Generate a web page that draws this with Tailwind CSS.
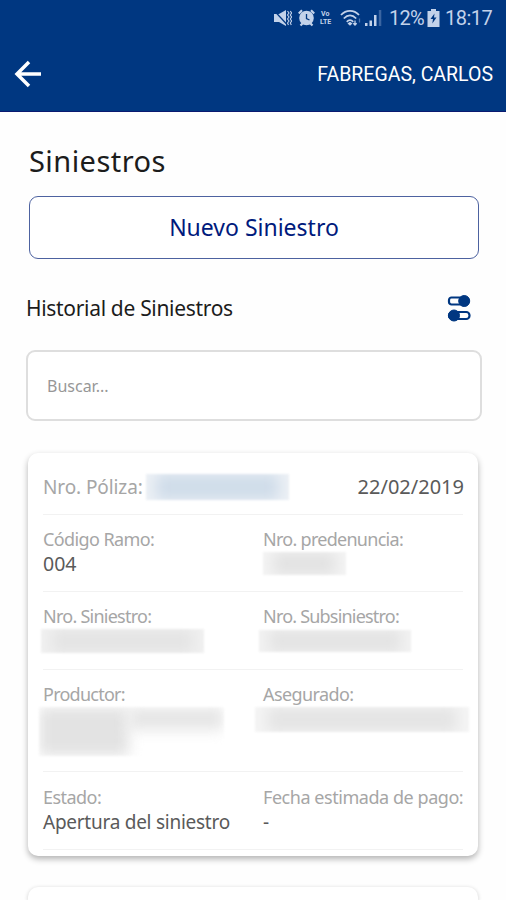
<!DOCTYPE html>
<html lang="es">
<head>
    <meta charset="UTF-8">
    <meta name="viewport" content="width=device-width, initial-scale=1.0">
    <title>Siniestros</title>
    <!-- Tailwind CSS -->
    <script src="https://cdn.jsdelivr.net/npm/@tailwindcss/browser@4"></script>
</head>
<body class="h-[900px] overflow-hidden bg-[#fefefe] font-['Noto_Sans',sans-serif] text-[#1c1c1c]">

    <header class="h-[112px] border-b border-[#0a1a70] bg-[#003781] font-['Roboto',sans-serif]">
        <!-- Barra de estado -->
        <div class="flex h-9 items-center justify-end pr-[14px] text-[#c3d2ea]">
            <!-- Silencio / vibración -->
            <svg class="mr-[6px] h-[18px] w-[19px]" viewBox="0 0 19 18" fill="currentColor">
                <path d="M1 5h5l7-4v16l-7-4H1z"/>
                <path d="M1.500 2l12 13" stroke="#003781" stroke-width="1.200"/>
                <path d="M14.500 2l1.500 2-1.500 2 1.500 2-1.500 2 1.500 2-1.500 2 1 2M17.300 2l1.300 2-1.300 2 1.300 2-1.300 2 1.300 2-1.300 2 1 2" fill="none" stroke="currentColor" stroke-width="1.100"/>
            </svg>
            <!-- Alarma -->
            <svg class="mr-[5px] h-[18px] w-[17px]" viewBox="0 0 17 18" fill="currentColor">
                <circle cx="8.500" cy="9" r="7.300"/>
                <path d="M.8 4.500L4 1.300M16.200 4.500L13 1.300M2.500 16.500l2-2M14.500 16.500l-2-2" stroke="currentColor" stroke-width="2.200"/>
                <path d="M8.500 5v4.500l3 1.500" fill="none" stroke="#003781" stroke-width="1.300"/>
            </svg>
            <div class="mr-[5px] flex w-[15px] flex-col text-[7px] leading-[8px] font-bold">
                <span class="pl-px">Vo</span>
                <span>LTE</span>
            </div>
            <!-- Wifi -->
            <svg class="mr-[4px] h-[18px] w-[21px]" viewBox="0 0 21 18" fill="none" stroke="currentColor" stroke-width="1.800">
                <path d="M1 6C6 .5 14 .5 19 6M3.800 9.500c4-4.200 8.400-4.200 12.400 0M6.800 12.800c2-2.300 4.400-2.300 6.400 0"/>
                <path d="M7.500 14.500l2.500-1.700 2.500 1.700-2.500 2.300z" fill="currentColor" stroke="none"/>
                <path d="M15 11.500v5M13.300 14.300L15 16l1.700-1.700" stroke-width="1.300"/>
                <path d="M19.500 9.500v4" stroke-width="1.300" opacity=".4"/>
            </svg>
            <!-- Cobertura -->
            <svg class="mr-[7px] h-[18px] w-[17px]" viewBox="0 0 17 18" fill="currentColor">
                <path d="M0 14h2.500v3H0zM4.500 11.500H7V17H4.500zM9 6h2.500v11H9z"/>
                <path d="M13.800 1h2.500v16h-2.500z" opacity=".3"/>
            </svg>
            <span class="w-[34px] text-[20px] tracking-[-0.7px] whitespace-nowrap">12%</span>
            <!-- Batería -->
            <svg class="mr-[5px] ml-[4px] h-[18px] w-[13px]" viewBox="0 0 13 18" fill="currentColor">
                <path d="M4 0h5v2h3.500v16H.5V2H4z"/>
                <path d="M7.500 4.500l-4 5.500h2.500l-.7 4.500 4.200-6H7z" fill="#003781"/>
            </svg>
            <span class="w-[47px] text-[20px] tracking-[-0.5px] whitespace-nowrap">18:17</span>
        </div>
        <!-- Navegación -->
        <div class="flex h-[75px] items-center justify-between pr-[13px] pl-[14px] text-white">
            <svg class="h-7 w-7" viewBox="0 0 28 28" fill="none" stroke="currentColor" stroke-width="3.500">
                <path d="M27 14H3M15 2L3 14l12 12"/>
            </svg>
            <span class="pt-[2px] text-[19.500px]">FABREGAS, CARLOS</span>
        </div>
    </header>

    <main class="px-[26px]">
        <h1 class="ml-[3px] pt-[29px] text-[29px] leading-[40px] tracking-[0.450px]">Siniestros</h1>

        <button class="mx-[3px] mt-[15px] flex h-[63px] w-[450px] items-center justify-center rounded-[9px] border border-[#4d62a0] bg-white text-[23px] text-[#001a7c]">Nuevo Siniestro</button>

        <div class="mt-[29px] flex h-10 items-center justify-between pr-[9px]">
            <h2 class="pt-px text-[21px] tracking-[-0.320px] whitespace-nowrap">Historial de Siniestros</h2>
            <!-- Filtros -->
            <svg class="h-[28px] w-[24px]" viewBox="0 0 24 28" fill="none" stroke="#003781" stroke-width="2.200">
                <rect x="2" y="3.500" width="19" height="7" rx="2.500"/>
                <circle cx="17.200" cy="7" r="5.500" fill="#003781" stroke-width="1"/>
                <rect x="2" y="18" width="20.500" height="7" rx="3.300"/>
                <circle cx="7" cy="21.500" r="5.500" fill="#003781" stroke-width="1"/>
            </svg>
        </div>

        <input type="text" placeholder="Buscar..." class="mt-[22px] block h-[71px] w-[456px] rounded-[9px] border-2 border-[#dedede] bg-white pl-[19px] text-[16px] placeholder:text-[#979797]">

        <!-- Tarjeta de siniestro -->
        <section class="mx-[2px] mt-[32px] h-[403px] rounded-[10px] bg-white px-[15px] text-[18px] leading-6 text-[#a6a6a6] shadow-[0_3px_6px_rgba(0,0,0,0.3)]">
            <div class="flex h-[62px] items-center justify-between border-b border-[#f2f2f2] pt-[6px]">
                <div class="flex items-center">
                    <span class="w-[103px] text-[19px] tracking-[-0.100px] whitespace-nowrap">Nro. Póliza:</span>
                    <div class="h-[26px] w-[143px] overflow-hidden bg-[#edf1f6] px-[10px] blur-[1px]">
                        <div class="h-full bg-[#cfdce9] blur-[7px]"></div>
                    </div>
                </div>
                <span class="-mr-px text-[20px] text-[#5a5a5a]">22/02/2019</span>
            </div>

            <div class="grid h-[77px] grid-cols-[220px_1fr] border-b border-[#f2f2f2] pt-[12px]">
                <div>
                    <p class="pb-px tracking-[-0.600px] whitespace-nowrap">Código Ramo:</p>
                    <p class="text-[19.500px] text-[#5a5a5a]">004</p>
                </div>
                <div>
                    <p class="pb-px tracking-[-0.720px] whitespace-nowrap">Nro. predenuncia:</p>
                    <div class="h-[23px] w-[83px] overflow-hidden bg-[#f4f4f4] px-[10px] blur-[1px]">
                        <div class="h-full bg-[#e2e2e2] blur-[7px]"></div>
                    </div>
                </div>
            </div>

            <div class="grid h-[78px] grid-cols-[220px_1fr] border-b border-[#f2f2f2] pt-[12px]">
                <div>
                    <p class="pb-px tracking-[-0.750px] whitespace-nowrap">Nro. Siniestro:</p>
                    <div class="-ml-[2px] h-[24px] w-[163px] overflow-hidden bg-[#f1f1f1] px-[10px] blur-[1px]">
                        <div class="h-full bg-[#e4e4e4] blur-[7px]"></div>
                    </div>
                </div>
                <div>
                    <p class="pb-px tracking-[-0.800px] whitespace-nowrap">Nro. Subsiniestro:</p>
                    <div class="-ml-[4px] mt-px h-[22px] w-[152px] overflow-hidden bg-[#f2f2f2] px-[10px] blur-[1px]">
                        <div class="h-full bg-[#e3e3e3] blur-[7px]"></div>
                    </div>
                </div>
            </div>

            <div class="grid h-[102px] grid-cols-[220px_1fr] border-b border-[#f2f2f2] pt-[12px]">
                <div>
                    <p class="pb-px tracking-[-0.750px] whitespace-nowrap">Productor:</p>
                    <div class="-ml-[4px] flex h-[49px] w-[185px] overflow-hidden blur-[1px]">
                        <div class="h-full w-[90px] bg-[#e3e3e3] blur-[7px]"></div>
                        <div class="h-[23px] w-[95px] bg-[#e6e6e6] blur-[7px]"></div>
                    </div>
                </div>
                <div>
                    <p class="pb-px tracking-[-0.600px] whitespace-nowrap">Asegurado:</p>
                    <div class="-ml-[8px] h-[25px] w-[214px] overflow-hidden bg-[#f5f5f5] px-[12px] blur-[1px]">
                        <div class="h-full bg-[#e4e4e4] blur-[7px]"></div>
                    </div>
                </div>
            </div>

            <div class="grid h-[78px] grid-cols-[220px_1fr] border-b border-[#f2f2f2] pt-[13px]">
                <div>
                    <p class="pb-px tracking-[-0.550px] whitespace-nowrap">Estado:</p>
                    <p class="text-[19px] tracking-[-0.260px] whitespace-nowrap text-[#5a5a5a]">Apertura del siniestro</p>
                </div>
                <div>
                    <p class="pb-px tracking-[-0.450px] whitespace-nowrap">Fecha estimada de pago:</p>
                    <p class="text-[19px] text-[#5a5a5a]">-</p>
                </div>
            </div>
        </section>

        <!-- Siguiente tarjeta -->
        <section class="mx-[2px] mt-[31px] h-[13px] rounded-t-[10px] bg-white shadow-[0_1px_4px_rgba(0,0,0,0.2)]"></section>
    </main>
</body>
</html>
